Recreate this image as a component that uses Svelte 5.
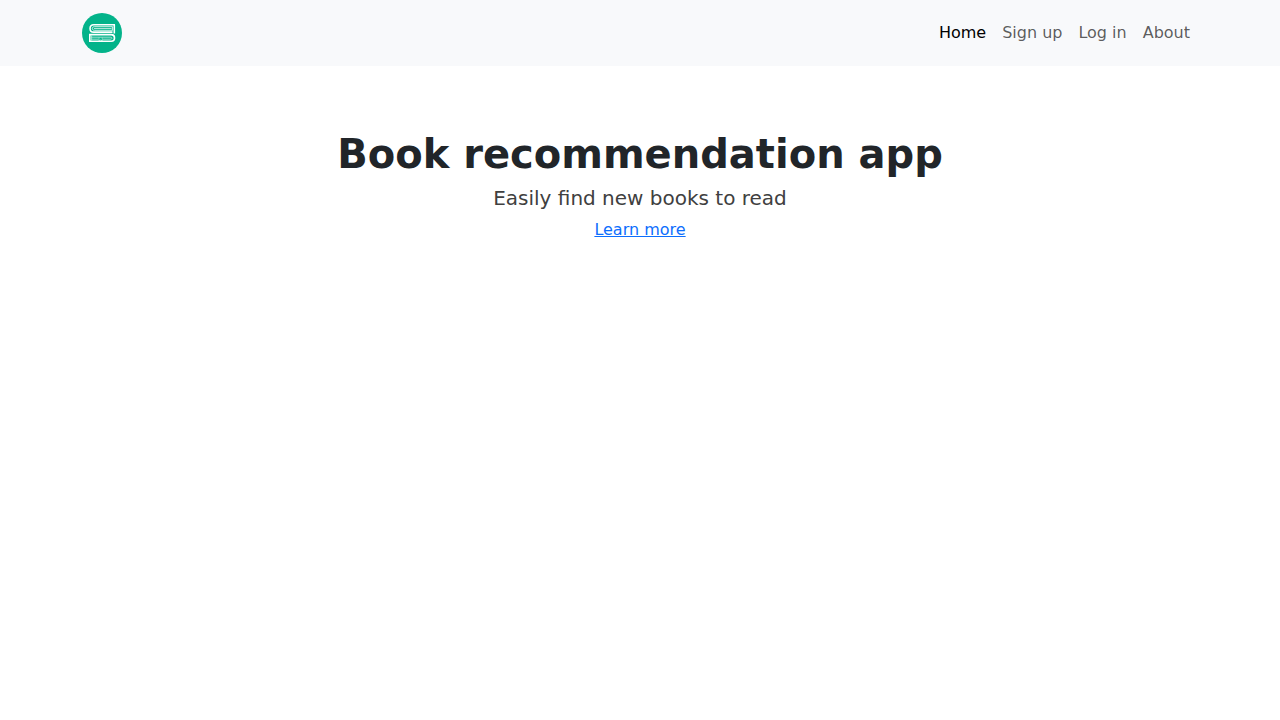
<script>
  const links = [
    { label: 'Home', active: true },
    { label: 'Sign up' },
    { label: 'Log in' },
    { label: 'About' }
  ];
</script>

<nav class="navbar">
  <div class="container">
    <a class="brand" href="#home" aria-label="Home">
      <svg width="40" height="40" viewBox="0 0 40 40" fill="none">
        <circle cx="20" cy="20" r="20" fill="#03b38a" />
        <g stroke="#fff" stroke-width="1.6">
          <path d="M33 11.7H11.8C6.8 11.7 6.8 19.1 11.8 19.1H30.5M32.3 11.7V20.5" />
          <path d="M7 21.6H29.3C33.6 21.6 33.6 28.2 29.3 28.2H7M7.8 20.8V29" />
        </g>
        <g stroke="#fff" stroke-width=".9">
          <path d="M30.7 13.7H12.4C9.6 13.7 9.6 17.3 12.4 17.3H30.7M30.4 13.7V17.3" opacity=".9" />
          <path d="M12 15.5H29.5" opacity=".75" />
          <path d="M9.5 24.2H28.3C30.5 24.2 30.5 26.2 28.3 26.2H20.5M16.5 26.2H9.5M9.6 22.5V27.5" opacity=".65" />
          <path d="M17 24.5V28L18.6 27L20.2 28V24.5" opacity=".5" />
        </g>
      </svg>
    </a>
    <ul class="links">
      {#each links as link}
        <li><a href="#{link.label}" class:active={link.active}>{link.label}</a></li>
      {/each}
    </ul>
  </div>
</nav>

<main>
  <h1>Book recommendation app</h1>
  <h2>Easily find new books to read</h2>
  <a href="#about">Learn more</a>
</main>

<style>
  :global(body) {
    margin: 0;
    background: #fff;
    color: #212529;
    font: 400 16px/1.5 'DejaVu Sans', sans-serif;
  }
  .navbar {
    padding: 8px 0;
    background: #f8f9fb;
  }
  .container {
    box-sizing: border-box;
    max-width: 1140px;
    margin: 0 auto;
    padding: 0 12px;
    display: flex;
    align-items: center;
    justify-content: space-between;
  }
  .brand {
    display: flex;
    padding: 5px 0;
  }
  .links {
    display: flex;
    margin: 0;
    padding: 0;
    list-style: none;
  }
  .links a {
    display: block;
    padding: 8px;
    color: rgba(0, 0, 0, 0.65);
    text-decoration: none;
  }
  .links a.active {
    color: #000;
  }
  main {
    padding-top: 64px;
    text-align: center;
  }
  h1,
  h2 {
    margin: 0 0 8px;
    line-height: 1.2;
  }
  h1 {
    font-size: 40px;
    font-weight: 700;
  }
  h2 {
    font-size: 20px;
    font-weight: 400;
    color: #404040;
  }
  main a {
    color: #0d6efd;
  }
</style>
